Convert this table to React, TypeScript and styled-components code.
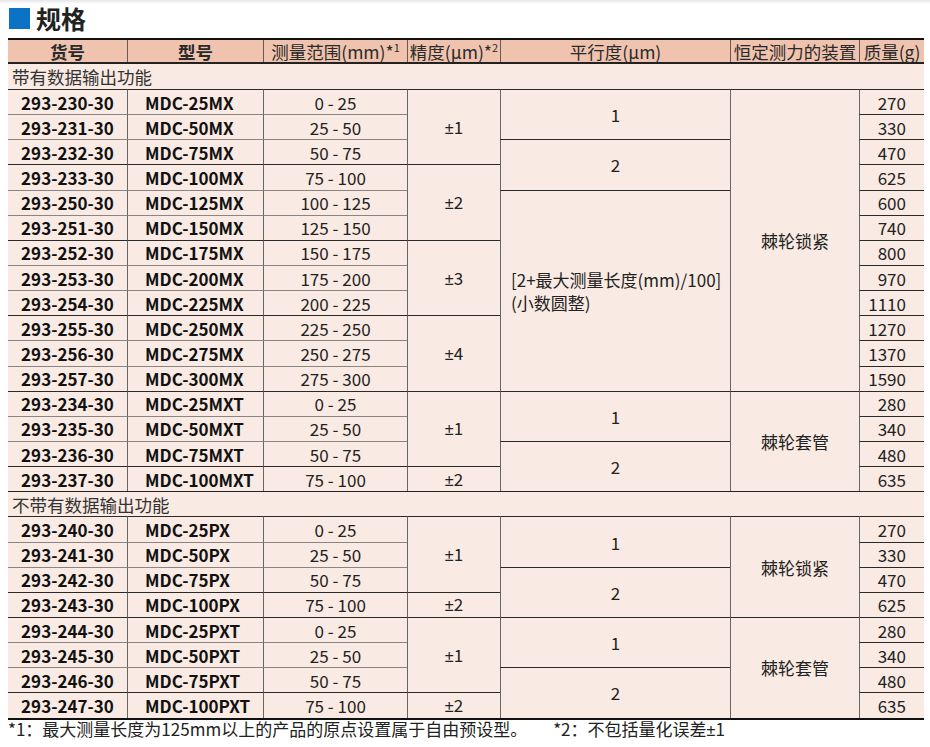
import React from "react";
import styled, { createGlobalStyle } from "styled-components";

const GlobalStyle = createGlobalStyle`
  html, body {
    margin: 0;
    padding: 0;
    background: #ffffff;
  }
  body {
    font-family: "Noto Sans CJK SC", "Noto Sans", sans-serif;
    color: #1c1c1c;
  }
`;

const Page = styled.div`
  width: 930px;
  padding: 0 0 0 8px;
  box-sizing: border-box;
`;

const TopShade = styled.div`
  height: 4px;
  margin-left: -8px;
  background: linear-gradient(#e6e6e6, #ffffff);
`;

const Title = styled.h2`
  display: flex;
  align-items: center;
  gap: 6px;
  height: 28px;
  margin: 0 0 6px 1px;
  font-size: 25px;
  font-weight: 700;
  color: #222;
  line-height: 28px;
`;

const Square = styled.span`
  display: inline-block;
  width: 21px;
  height: 21px;
  background: #0b72c5;
`;

const Table = styled.table`
  width: 916px;
  table-layout: fixed;
  border-collapse: separate;
  border-spacing: 0;
  border-top: 2px solid #111;
  border-bottom: 2px solid #111;
  font-size: 17px;
  line-height: 21px;
  background: #f9eae3;
`;

const HeadRow = styled.tr`
  height: 22px;
  background: #efc3ae;
`;

const Th = styled.th<{ $bold?: boolean; $first?: boolean }>`
  padding: 0;
  font-size: 17.5px;
  font-weight: ${(p) => (p.$bold ? 700 : 400)};
  color: #2a2a2a;
  text-align: center;
  white-space: nowrap;
  border-left: ${(p) => (p.$first ? "none" : "1px solid #6a5852")};
  sup {
    font-size: 11px;
    vertical-align: 7px;
    line-height: 0;
  }
`;

const SectionRow = styled.tr<{ $afterHead?: boolean }>`
  height: ${(p) => (p.$afterHead ? "27px" : "25.15px")};
`;

const SectionCell = styled.td<{ $afterHead?: boolean }>`
  padding: 0 0 0 4px;
  font-size: 17.5px;
  text-align: left;
  color: #333;
  border-top: ${(p) => (p.$afterHead ? "2px solid #222" : "1px solid #222")};
`;

const Row = styled.tr`
  height: 25.15px;
`;

const Td = styled.td<{
  $align?: "left" | "center" | "right";
  $bold?: boolean;
  $first?: boolean;
  $soft?: boolean;
  $pad?: string;
}>`
  padding: ${(p) => p.$pad || "0"};
  text-align: ${(p) => p.$align || "center"};
  font-weight: ${(p) => (p.$bold ? 700 : 400)};
  vertical-align: middle;
  white-space: nowrap;
  color: ${(p) => (p.$bold ? "#111" : "#222")};
  border-top: 1px solid ${(p) => (p.$soft ? "#8a8482" : "#2a2a2a")};
  border-left: ${(p) => (p.$first ? "none" : "1px solid #666")};
`;

const PlusMinus = styled.span`
  font-family: "Liberation Sans", "Noto Sans", sans-serif;
  font-size: 0.95em;
`;

const Formula = styled.div`
  text-align: left;
  line-height: 23px;
  white-space: nowrap;
`;

const Footnote = styled.p`
  margin: 0;
  font-size: 17px;
  line-height: 18px;
  color: #222;
  white-space: nowrap;
`;

const NoteGap = styled.span`
  display: inline-block;
  width: 26px;
`;

type Span = { text: React.ReactNode; span: number };
type DataRow = {
  code: string;
  model: string;
  range: string;
  acc?: Span;
  par?: Span;
  dev?: Span;
  mass: string;
  groupStart?: boolean;
};

const pm = (n: string) => (
  <>
    <PlusMinus>±</PlusMinus>
    {n}
  </>
);

const formula = (
  <Formula>
    [2+最大测量长度(mm)/100]
    <br />
    (小数圆整)
  </Formula>
);

const withData: DataRow[] = [
  { code: "293-230-30", model: "MDC-25MX", range: "0 - 25", acc: { text: pm("1"), span: 3 }, par: { text: "1", span: 2 }, dev: { text: "棘轮锁紧", span: 12 }, mass: "270", groupStart: true },
  { code: "293-231-30", model: "MDC-50MX", range: "25 - 50", mass: "330" },
  { code: "293-232-30", model: "MDC-75MX", range: "50 - 75", par: { text: "2", span: 2 }, mass: "470" },
  { code: "293-233-30", model: "MDC-100MX", range: "75 - 100", acc: { text: pm("2"), span: 3 }, mass: "625", groupStart: true },
  { code: "293-250-30", model: "MDC-125MX", range: "100 - 125", par: { text: formula, span: 8 }, mass: "600" },
  { code: "293-251-30", model: "MDC-150MX", range: "125 - 150", mass: "740" },
  { code: "293-252-30", model: "MDC-175MX", range: "150 - 175", acc: { text: pm("3"), span: 3 }, mass: "800", groupStart: true },
  { code: "293-253-30", model: "MDC-200MX", range: "175 - 200", mass: "970" },
  { code: "293-254-30", model: "MDC-225MX", range: "200 - 225", mass: "1110" },
  { code: "293-255-30", model: "MDC-250MX", range: "225 - 250", acc: { text: pm("4"), span: 3 }, mass: "1270", groupStart: true },
  { code: "293-256-30", model: "MDC-275MX", range: "250 - 275", mass: "1370" },
  { code: "293-257-30", model: "MDC-300MX", range: "275 - 300", mass: "1590" },
  { code: "293-234-30", model: "MDC-25MXT", range: "0 - 25", acc: { text: pm("1"), span: 3 }, par: { text: "1", span: 2 }, dev: { text: "棘轮套管", span: 4 }, mass: "280", groupStart: true },
  { code: "293-235-30", model: "MDC-50MXT", range: "25 - 50", mass: "340" },
  { code: "293-236-30", model: "MDC-75MXT", range: "50 - 75", par: { text: "2", span: 2 }, mass: "480" },
  { code: "293-237-30", model: "MDC-100MXT", range: "75 - 100", acc: { text: pm("2"), span: 1 }, mass: "635", groupStart: true },
];

const withoutData: DataRow[] = [
  { code: "293-240-30", model: "MDC-25PX", range: "0 - 25", acc: { text: pm("1"), span: 3 }, par: { text: "1", span: 2 }, dev: { text: "棘轮锁紧", span: 4 }, mass: "270", groupStart: true },
  { code: "293-241-30", model: "MDC-50PX", range: "25 - 50", mass: "330" },
  { code: "293-242-30", model: "MDC-75PX", range: "50 - 75", par: { text: "2", span: 2 }, mass: "470" },
  { code: "293-243-30", model: "MDC-100PX", range: "75 - 100", acc: { text: pm("2"), span: 1 }, mass: "625", groupStart: true },
  { code: "293-244-30", model: "MDC-25PXT", range: "0 - 25", acc: { text: pm("1"), span: 3 }, par: { text: "1", span: 2 }, dev: { text: "棘轮套管", span: 4 }, mass: "280", groupStart: true },
  { code: "293-245-30", model: "MDC-50PXT", range: "25 - 50", mass: "340" },
  { code: "293-246-30", model: "MDC-75PXT", range: "50 - 75", par: { text: "2", span: 2 }, mass: "480" },
  { code: "293-247-30", model: "MDC-100PXT", range: "75 - 100", acc: { text: pm("2"), span: 1 }, mass: "635", groupStart: true },
];

const renderRows = (rows: DataRow[]) =>
  rows.map((r) => {
    const soft = !r.groupStart;
    return (
      <Row key={r.code}>
        <Td $first $bold $soft={soft}>
          {r.code}
        </Td>
        <Td $bold $soft={soft} $align="left" $pad="0 0 0 17px">
          {r.model}
        </Td>
        <Td $soft={soft}>{r.range}</Td>
        {r.acc && <Td rowSpan={r.acc.span}>{r.acc.text}</Td>}
        {r.par && (
          <Td rowSpan={r.par.span} $pad={r.par.span > 2 ? "0 0 0 10px" : "0"}>
            {r.par.text}
          </Td>
        )}
        {r.dev && <Td rowSpan={r.dev.span}>{r.dev.text}</Td>}
        <Td $align="right" $pad="0 18px 0 0">
          {r.mass}
        </Td>
      </Row>
    );
  });

const App = () => {
  return (
    <Page>
      <GlobalStyle />
      <TopShade />
      <Title>
        <Square />
        规格
      </Title>
      <Table>
        <colgroup>
          <col style={{ width: 119 }} />
          <col style={{ width: 136 }} />
          <col style={{ width: 144 }} />
          <col style={{ width: 93 }} />
          <col style={{ width: 230 }} />
          <col style={{ width: 129 }} />
          <col style={{ width: 65 }} />
        </colgroup>
        <thead>
          <HeadRow>
            <Th $first $bold>货号</Th>
            <Th $bold>型号</Th>
            <Th>
              测量范围(mm)*<sup>1</sup>
            </Th>
            <Th>
              精度(μm)*<sup>2</sup>
            </Th>
            <Th>平行度(μm)</Th>
            <Th>恒定测力的装置</Th>
            <Th>质量(g)</Th>
          </HeadRow>
        </thead>
        <tbody>
          <SectionRow $afterHead>
            <SectionCell colSpan={7} $afterHead>
              带有数据输出功能
            </SectionCell>
          </SectionRow>
          {renderRows(withData)}
          <SectionRow>
            <SectionCell colSpan={7}>不带有数据输出功能</SectionCell>
          </SectionRow>
          {renderRows(withoutData)}
        </tbody>
      </Table>
      <Footnote>
        *1：最大测量长度为125mm以上的产品的原点设置属于自由预设型。
        <NoteGap />
        *2：不包括量化误差<PlusMinus>±</PlusMinus>1
      </Footnote>
    </Page>
  );
};

export default App;
